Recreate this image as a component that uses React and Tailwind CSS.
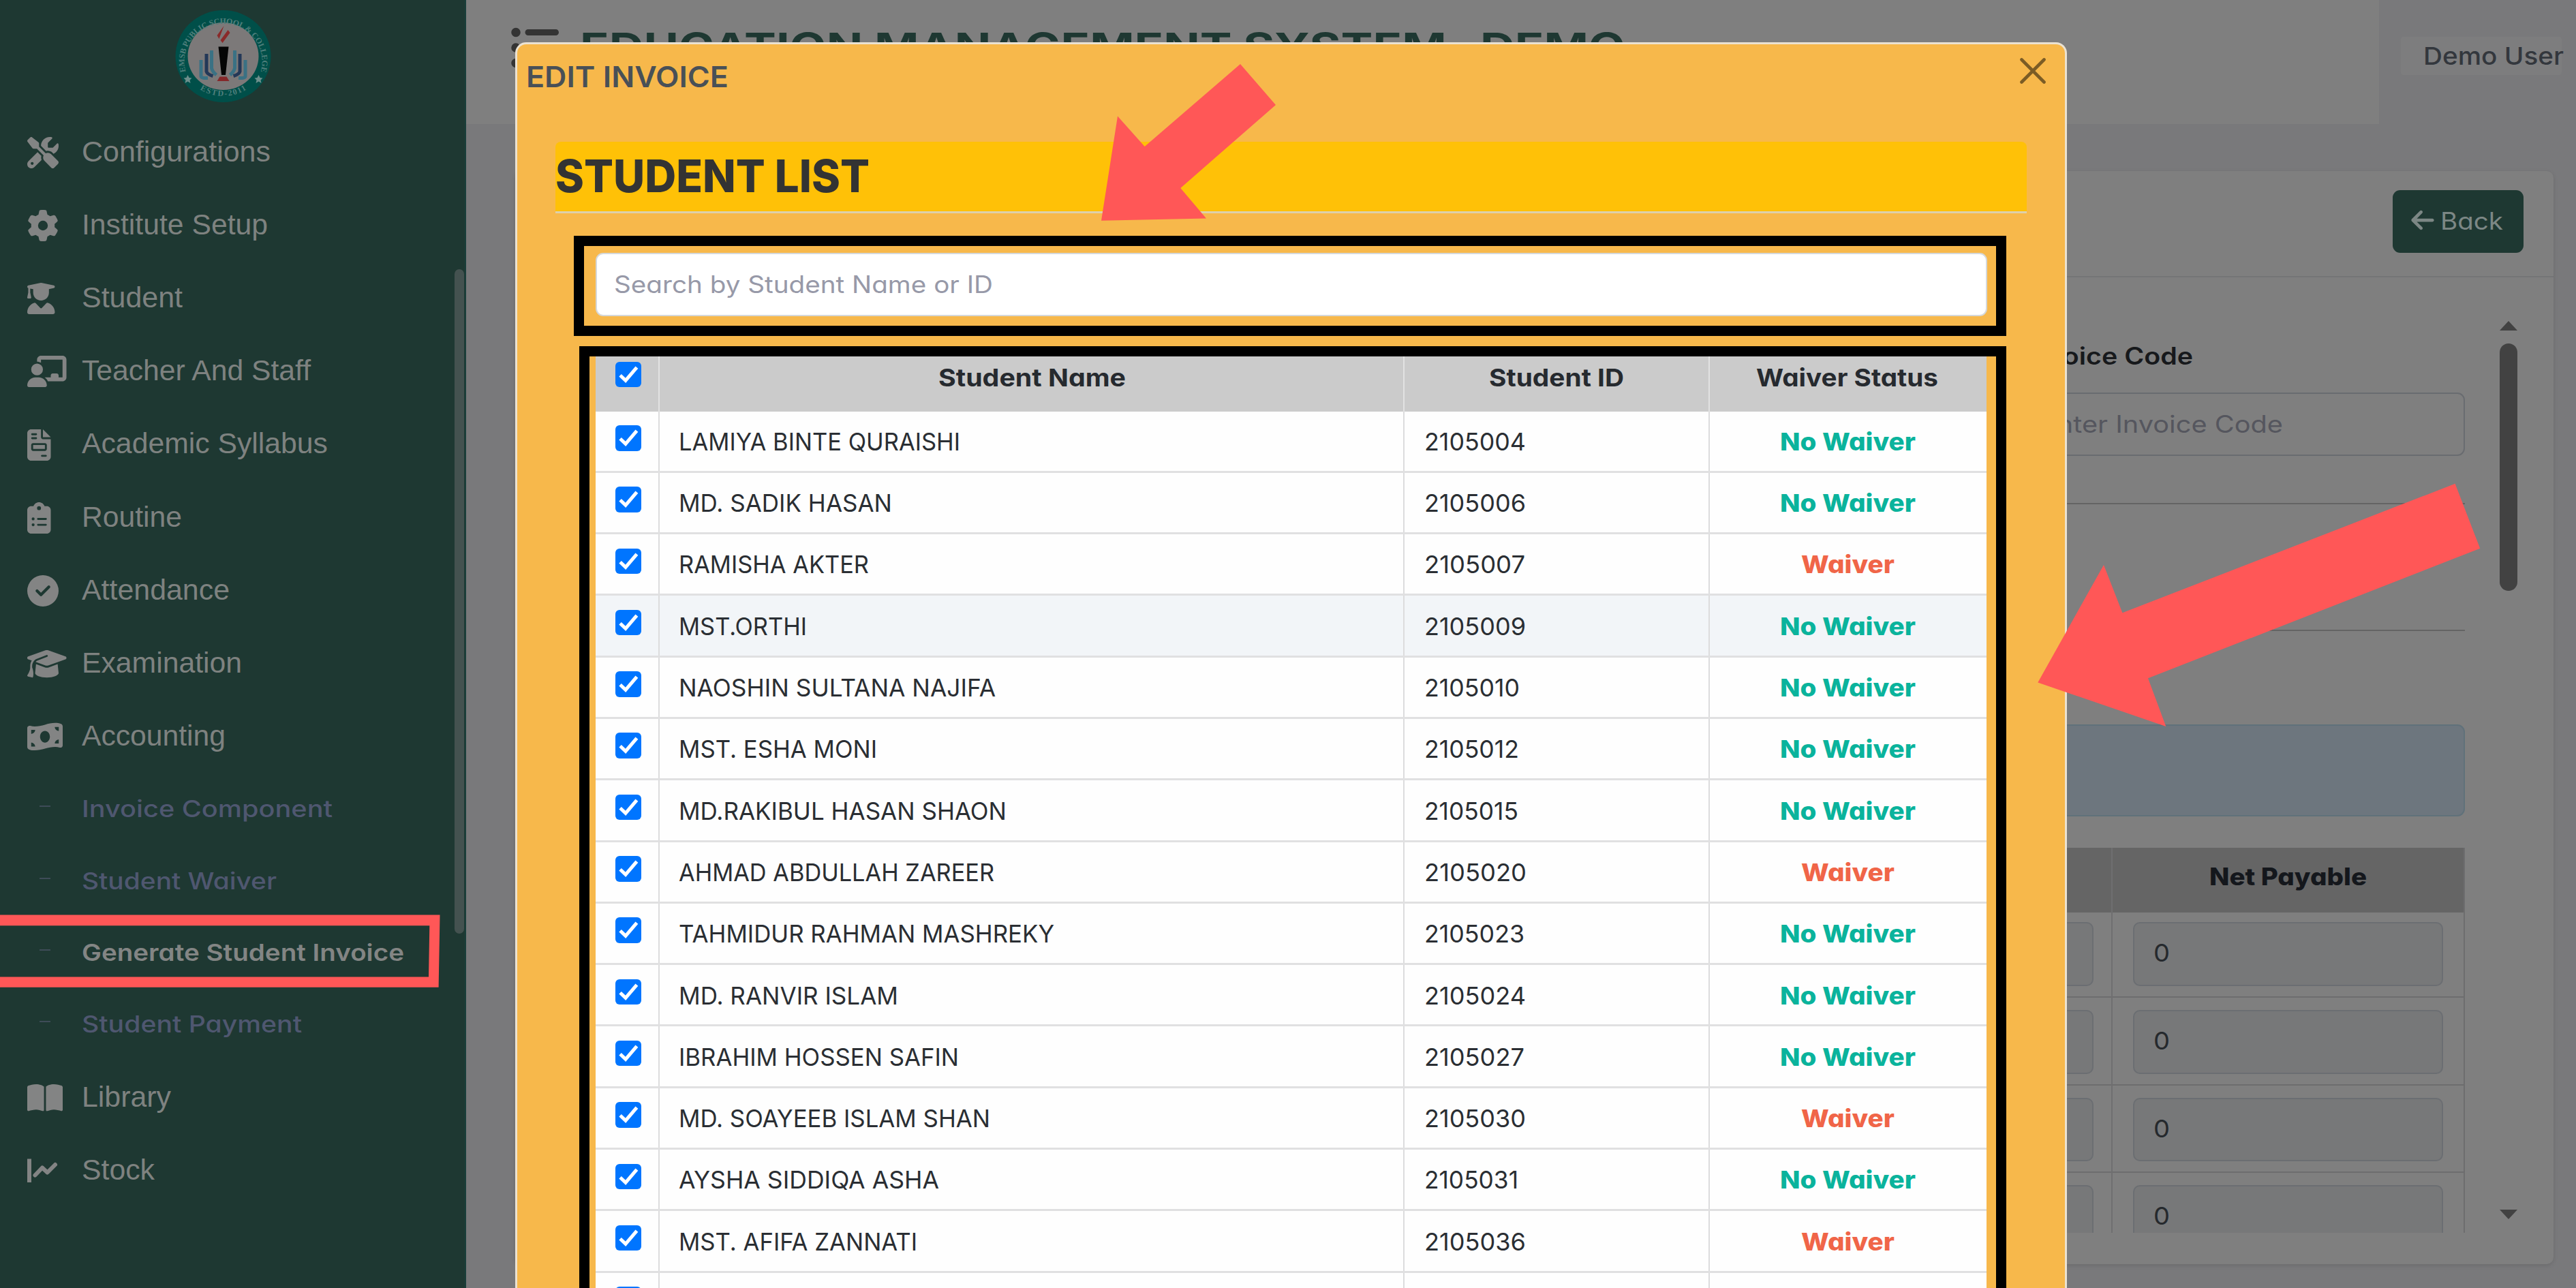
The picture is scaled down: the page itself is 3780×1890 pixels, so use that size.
import React, { useLayoutEffect, useRef, useState } from "react";
import {
  FaScrewdriverWrench,
  FaGear,
  FaUserGraduate,
  FaChalkboardUser,
  FaFileInvoice,
  FaClipboardList,
  FaCircleCheck,
  FaGraduationCap,
  FaMoneyBillWave,
  FaBookOpen,
  FaListUl,
  FaArrowLeft,
} from "react-icons/fa6";

// Text that is stretched horizontally to an exact width.
function Fit({ w, className = "", children }) {
  const ref = useRef(null);
  const [k, setK] = useState(1);
  useLayoutEffect(() => {
    if (ref.current) setK(w / ref.current.getBoundingClientRect().width);
  }, [w]);
  return (
    <span className={"inline-block shrink-0 whitespace-nowrap text-left " + className} style={{ width: w }}>
      <span ref={ref} className="inline-block origin-left" style={{ transform: k === 1 ? undefined : `scaleX(${k})` }}>
        {children}
      </span>
    </span>
  );
}

function StockIcon({ className }) {
  return (
    <svg viewBox="0 0 46 46" className={className} fill="none" stroke="currentColor">
      <path d="M3 5.5V40" strokeWidth="6" />
      <path d="M11.5 29.5 22 18.500l7.500 7L41 14" strokeWidth="6" strokeLinecap="round" strokeLinejoin="round" />
    </svg>
  );
}

function Logo() {
  return (
    <svg viewBox="0 0 140 135" className="h-[135px] w-[141px]">
      <defs>
        <path id="ringTop" d="M15 90A57 55.500 0 1 1 125 90" />
        <path id="ringBottom" d="M30 112A62 59 0 0 0 110 112" />
      </defs>
      <ellipse cx="70" cy="67.500" rx="70" ry="67.500" fill="#004f49" />
      <ellipse cx="70" cy="67.500" rx="52" ry="49.500" fill="#7c7979" />
      <g fill="#4f7f7c" fontFamily="Liberation Serif, serif" fontWeight="bold" fontSize="12">
        <text>
          <textPath href="#ringTop" textLength="206">EMSB PUBLIC SCHOOL &amp; COLLEGE</textPath>
        </text>
        <text textAnchor="middle">
          <textPath href="#ringBottom" startOffset="50%" textLength="72">ESTD-2011</textPath>
        </text>
      </g>
      <path d="M18 95l2 4 4 .5-3 3 1 4.500-4-2.500-4 2.500 1-4.500-3-3 4-.5zM122 95l2 4 4 .5-3 3 1 4.500-4-2.500-4 2.500 1-4.500-3-3 4-.5z" fill="#6d8f8c" />
      <path d="M71 23l-10 14 3 5zM77 29 66 44l3 4 11-15z" fill="#8a2a2a" />
      <path d="M63 53.500h15L73.500 95h-6z" fill="#050505" />
      <path d="M65 97.500h10l4 6.500H61z" fill="#85282a" />
      <g fill="none" strokeWidth="5">
        <path d="M37.500 73v24q0 3 10 2.500M102.500 73v24q0 3-10 2.500" stroke="#3a7184" />
        <path d="M45.500 64v26q1 4 9.500 6.500M94.500 64v26q-1 4-9.500 6.500" stroke="#233858" />
        <path d="M53 59v26q1 5 7 10M87 59v26q-1 5-7 10" stroke="#3a7184" />
      </g>
    </svg>
  );
}

const MENU = [
  { label: "Configurations", w: 277, Icon: FaScrewdriverWrench, size: "h-[46px] w-[46px]" },
  { label: "Institute Setup", w: 273, Icon: FaGear, size: "h-[46px] w-[46px]" },
  { label: "Student", w: 148, Icon: FaUserGraduate, size: "h-[46px] w-[40.500px]" },
  { label: "Teacher And Staff", w: 336, Icon: FaChalkboardUser, size: "h-[46px] w-[57.500px]" },
  { label: "Academic Syllabus", w: 361, Icon: FaFileInvoice, size: "h-[46px] w-[34.500px]" },
  { label: "Routine", w: 147, Icon: FaClipboardList, size: "h-[46px] w-[34.500px]" },
  { label: "Attendance", w: 217, Icon: FaCircleCheck, size: "h-[46px] w-[46px]" },
  { label: "Examination", w: 235, Icon: FaGraduationCap, size: "h-[46px] w-[57.500px]" },
  { label: "Accounting", w: 211, Icon: FaMoneyBillWave, size: "h-[46px] w-[52px]" },
];

const SUBMENU = [
  { label: "Invoice Component", w: 368 },
  { label: "Student Waiver", w: 286 },
  { label: "Generate Student Invoice", w: 473, active: true },
  { label: "Student Payment", w: 323 },
];

const MENU_END = [
  { label: "Library", w: 131, Icon: FaBookOpen, size: "h-[46px] w-[52px]" },
  { label: "Stock", w: 107, Icon: StockIcon, size: "h-[46px] w-[46px]" },
];

function MenuItem({ label, w, Icon, size }) {
  return (
    <div className="flex h-[107.200px] items-center pl-[40px] text-[#7e8280]">
      <span className="mt-[5px] w-[80px] shrink-0 text-[#838484]">
        <Icon className={size} preserveAspectRatio="none" />
      </span>
      <Fit w={w} className="mt-[3px] font-['Liberation_Sans',Arial,sans-serif] text-[42.400px] leading-none">
        {label}
      </Fit>
    </div>
  );
}

function Sidebar() {
  return (
    <aside className="relative flex h-full w-[684px] shrink-0 flex-col border-r-2 border-[#1a3f3b] bg-[#1e3832]">
      <div className="flex h-[167.700px] justify-center pr-[28px] pt-[15px]">
        <Logo />
      </div>
      {MENU.map((m) => (
        <MenuItem key={m.label} {...m} />
      ))}
      <div className="h-[1.500px]" />
      {SUBMENU.map((s) => (
        <div key={s.label} className="flex h-[105.200px] items-center pl-[58px]">
          <span className="mb-[6px] mr-[46px] h-[2px] w-[16px] bg-[#3e4c58]" />
          <Fit
            w={s.w}
            className={"mt-[2px] text-[34px] leading-none " + (s.active ? "font-semibold text-[#838584]" : "font-medium text-[#4f5770]")}
          >
            {s.label}
          </Fit>
        </div>
      ))}
      {MENU_END.map((m) => (
        <MenuItem key={m.label} {...m} />
      ))}
      <div className="absolute left-[667px] top-[395px] h-[975px] w-[14px] rounded-full bg-[#445250]" />
    </aside>
  );
}

function ReadOnlyCells({ first }) {
  return (
    <div className={"flex border-b-2 border-[#6d6d6e] " + (first ? "h-[125px] pt-[14px]" : "h-[128.500px] pt-[18px]")}>
      <div className="flex-1 pr-[26px]">
        <div className="h-[93.500px] rounded-[10px] border-2 border-[#6b6e72] bg-[#777879]" />
      </div>
      <div className="w-[517px] pl-[32px] pr-[30px]">
        <div className="flex h-[93.500px] items-center rounded-[10px] border-2 border-[#6b6e72] bg-[#777879] pl-[28px]">
          <Fit w={24} className="-mt-[3px] text-[36px] leading-none text-[#25292d]">0</Fit>
        </div>
      </div>
    </div>
  );
}

function PageBehind() {
  return (
    <main className="flex h-full flex-1 flex-col bg-[#79797b]">
      <header className="flex h-[182px]">
        <div className="flex w-[2807px] bg-[#7f7f7f] pl-[64px] pt-[34px]">
          <FaListUl className="size-[72px] text-[#343434]" />
          <Fit w={1534} className="ml-[31px] mt-[7px] text-[55px] font-bold leading-none text-[#1e3832]">
            EDUCATION MANAGEMENT SYSTEM- DEMO
          </Fit>
        </div>
        <div className="ml-[32px] mt-[54px] flex h-[56px] w-[236px] items-center rounded-[4px] bg-[#7d7d7e] pl-[33px]">
          <Fit w={206} className="-mt-[1px] text-[36px] font-medium leading-none text-[#33373d]">Demo User</Fit>
        </div>
      </header>

      <section className="ml-[72px] mt-[69px] flex h-[1604px] w-[2991px] flex-col rounded-[10px] bg-[#7f7f7f] shadow-[0_2px_6px_rgba(0,0,0,0.12)]">
        <div className="flex h-[156px] justify-end border-b-2 border-[#747576] pr-[44px] pt-[28px]">
          <button className="flex h-[92px] w-[192px] items-center rounded-[11px] bg-[#1e3832] pl-[27px] text-[#7c8785]">
            <FaArrowLeft className="mb-[4px] h-[38px] w-[34px]" />
            <Fit w={92} className="-mt-[2px] ml-[9px] text-[35px] leading-none">Back</Fit>
          </button>
        </div>

        <div className="flex h-[1402px] overflow-hidden pr-[53px]">
          <div className="flex flex-1 flex-col">
            <div className="ml-auto mt-[98px] w-[647px]">
              <div className="flex h-[36px]">
                <Fit w={248} className="text-[35px] font-semibold leading-none text-[#17191c]">Invoice Code</Fit>
              </div>
              <div className="mt-[35px] flex h-[93px] items-center rounded-[11px] border-2 border-[#696c70] pl-[23px]">
                <Fit w={355} className="text-[35px] leading-none text-[#55565e]">Enter Invoice Code</Fit>
              </div>
            </div>
            <div className="mt-[69px] h-[2px] shrink-0 bg-[#646464]" />
            <div className="mt-[184px] h-[2px] shrink-0 bg-[#646464]" />
            <div className="mt-[137px] h-[135px] shrink-0 rounded-[11px] border-2 border-[#60717a] bg-[#6d767e]" />
            <div className="relative mt-[46px] shrink-0 border-r-2 border-[#6d6d6e]">
              <div className="flex h-[95px] bg-[#656565]">
                <div className="flex-1" />
                <div className="flex w-[517px] items-center justify-center pb-[10px] pl-[2px]">
                  <Fit w={231} className="text-[35px] font-extrabold leading-none text-[#14171c]">Net Payable</Fit>
                </div>
              </div>
              <ReadOnlyCells first />
              <ReadOnlyCells />
              <ReadOnlyCells />
              <ReadOnlyCells />
              <div className="absolute inset-y-0 right-[515px] w-[2px] bg-[#6f6f70]" />
            </div>
          </div>
          <div className="ml-[51px] flex w-[26px] flex-col text-[#424242]">
            <svg viewBox="0 0 26 14" className="mt-[64px] h-[14px] w-[26px]" fill="currentColor">
              <path d="M13 0 26 14H0z" />
            </svg>
            <div className="mt-[19px] h-[363px] rounded-full bg-[#424242]" />
            <svg viewBox="0 0 26 14" className="mb-[20px] mt-auto h-[14px] w-[26px]" fill="currentColor">
              <path d="M0 0h26L13 14z" />
            </svg>
          </div>
        </div>
      </section>
    </main>
  );
}

const STUDENTS = [
  ["LAMIYA BINTE QURAISHI", 413, "2105004", 149, false],
  ["MD. SADIK HASAN", 313, "2105006", 149, false],
  ["RAMISHA AKTER", 279, "2105007", 148, true],
  ["MST.ORTHI", 188, "2105009", 149, false],
  ["NAOSHIN SULTANA NAJIFA", 465, "2105010", 140, false],
  ["MST. ESHA MONI", 291, "2105012", 139, false],
  ["MD.RAKIBUL HASAN SHAON", 481, "2105015", 138, false],
  ["AHMAD ABDULLAH ZAREER", 463, "2105020", 150, true],
  ["TAHMIDUR RAHMAN MASHREKY", 551, "2105023", 147, false],
  ["MD. RANVIR ISLAM", 322, "2105024", 149, false],
  ["IBRAHIM HOSSEN SAFIN", 411, "2105027", 147, false],
  ["MD. SOAYEEB ISLAM SHAN", 457, "2105030", 149, true],
  ["AYSHA SIDDIQA ASHA", 382, "2105031", 138, false],
  ["MST. AFIFA ZANNATI", 350, "2105036", 149, true],
];

const COLS = "grid grid-cols-[94px_1093px_448px_406px]";

function Check({ className }) {
  return (
    <span className={"ml-[29.500px] block size-[37.500px] rounded-[6px] bg-[#0075ff] " + className}>
      <svg viewBox="0 0 37 37" className="size-full" fill="none" stroke="#fff" strokeWidth="5">
        <path d="M7 19.500 14.800 27 31 8" />
      </svg>
    </span>
  );
}

function StudentTable() {
  return (
    <div className="w-[2041px] text-[35.500px] leading-none">
      <div className={COLS + " h-[81px] bg-[#cbcbcb] font-bold text-[#262a2f]"}>
        <div className="border-r-2 border-[#e2e2e2]">
          <Check className="mt-[8px]" />
        </div>
        <div className="border-r-2 border-[#e2e2e2] pl-[2px] pt-[14px] text-center">
          <Fit w={275}>Student Name</Fit>
        </div>
        <div className="border-r-2 border-[#e2e2e2] pt-[14px] text-center">
          <Fit w={198}>Student ID</Fit>
        </div>
        <div className="pr-[2px] pt-[14px] text-center">
          <Fit w={267}>Waiver Status</Fit>
        </div>
      </div>
      {STUDENTS.map(([name, nw, id, iw, waiver], i) => (
        <div
          key={id}
          className={COLS + " h-[90.300px] border-b-[3px] border-[#e0e0e1] text-[#2a2e33] " + (i === 3 ? "bg-[#f2f5f8]" : "bg-[#fefefe]")}
        >
          <div className="border-r-2 border-[#dcdcdd]">
            <Check className="mt-[20.500px]" />
          </div>
          <div className="flex items-center border-r-2 border-[#dcdcdd] pl-[28px] pt-[3px]">
            <Fit w={nw}>{name}</Fit>
          </div>
          <div className="flex items-center border-r-2 border-[#dcdcdd] pl-[29px] pt-[3px]">
            <Fit w={iw}>{id}</Fit>
          </div>
          <div className="flex items-center justify-center pt-[3px] font-extrabold">
            {waiver ? (
              <Fit w={137} className="text-[#f06548]">Waiver</Fit>
            ) : (
              <Fit w={199} className="text-[#0ab39c]">No Waiver</Fit>
            )}
          </div>
        </div>
      ))}
      <div className={COLS + " h-[90.300px] bg-[#fefefe]"}>
        <div className="border-r-2 border-[#dcdcdd]">
          <Check className="mt-[20.500px]" />
        </div>
        <div className="border-r-2 border-[#dcdcdd]" />
        <div className="border-r-2 border-[#dcdcdd]" />
      </div>
    </div>
  );
}

function InvoiceModal() {
  return (
    <div className="absolute left-[756px] top-[62px] flex h-[1840px] w-[2277px] flex-col rounded-t-[16px] border-[3px] border-b-0 border-[#ebe2d2] bg-[#f7b84b]">
      <div className="flex h-[143px] shrink-0 justify-between pl-[13px] pr-[28px]">
        <Fit w={297} className="mt-[26px] text-[43px] font-semibold leading-none text-[#495057]">EDIT INVOICE</Fit>
        <svg viewBox="0 0 38 38" className="mt-[20px] size-[38px]" stroke="#7b5c25" strokeWidth="4.600" strokeLinecap="round">
          <path d="M2.500 2.500 35.500 35.500M35.500 2.500 2.500 35.500" />
        </svg>
      </div>
      <div className="ml-[56px] flex h-[105px] w-[2159px] shrink-0 items-center rounded-t-[8px] border-b-[3px] border-[#ddd0ac] bg-[#ffc107]">
        <Fit w={461} className="-mt-[2px] text-[66px] font-extrabold leading-none text-[#333333]">STUDENT LIST</Fit>
      </div>
      <div className="ml-[82.500px] mt-[32.500px] h-[147px] w-[2102px] shrink-0 border-[15px] border-black pl-[17px] pr-[13px] pt-[10px]">
        <div className="flex h-[93.500px] items-center rounded-[11px] border-2 border-[#d5d8da] bg-white pl-[25px]">
          <Fit w={556} className="text-[35px] leading-none text-[#9799a8]">Search by Student Name or ID</Fit>
        </div>
      </div>
      <div className="ml-[91px] mt-[15px] w-[2093.500px] flex-1 overflow-hidden border-x-[15px] border-t-[15px] border-black pl-[8.500px]">
        <StudentTable />
      </div>
    </div>
  );
}

// Red highlights drawn over the page: a menu outline and two arrows.
function Callouts() {
  return (
    <svg viewBox="0 0 3780 1890" className="pointer-events-none absolute inset-0 h-[1890px] w-[3780px]" fill="#ff5757">
      <path d="M0 1342.600H645.500L643.600 1448.800H0V1433.500H629L630.300 1358.200H0z" />
      <path d="M1820 94 1872 154 1732.300 276 1770 320.500 1616 323.700 1640 170.600 1679.700 215z" />
      <path d="M3602.600 709.800 3639.200 804.800 3152 995.300 3178.300 1066 2990.300 1001.600 3087 829 3114.400 899.300z" />
    </svg>
  );
}

export default function App() {
  return (
    <div className="relative flex h-[1890px] w-[3780px] overflow-hidden bg-[#79797b] font-['Inter',sans-serif] [font-feature-settings:'cv11']">
      <Sidebar />
      <PageBehind />
      <InvoiceModal />
      <Callouts />
    </div>
  );
}
